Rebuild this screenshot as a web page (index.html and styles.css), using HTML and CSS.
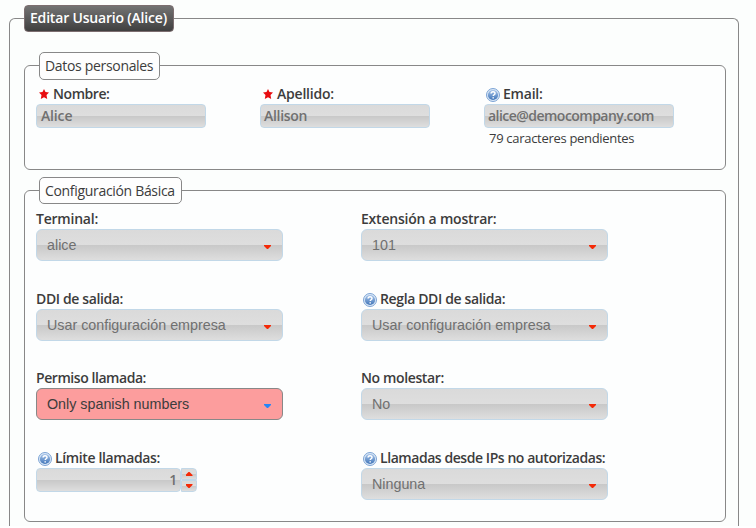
FILE: index.html
```html
<!DOCTYPE html>
<html lang="es">
<head>
<meta charset="utf-8">
<title>Editar Usuario</title>
<link rel="stylesheet" href="styles.css">
</head>
<body>
<svg class="defs" width="0" height="0">
  <defs>
    <linearGradient id="blue" x1="0" y1="0" x2="0" y2="1"><stop offset="0" stop-color="#a9c6ea"/><stop offset="1" stop-color="#3f74b8"/></linearGradient>
    <symbol id="help" viewBox="0 0 14 14">
      <circle cx="7" cy="7" r="6.5" fill="#dce9f7" stroke="#6f9bd0" stroke-width=".9"/>
      <circle cx="7" cy="7" r="5.1" fill="url(#blue)"/>
      <path d="M5.1 5.6c0-2.3 3.9-2.3 3.9-.2 0 1.4-1.8 1.3-1.8 2.7M7.2 9.2v1.4" fill="none" stroke="#fff" stroke-width="1.5"/>
    </symbol>
    <symbol id="star" viewBox="0 0 10 10"><path d="M5 0l1.5 3.1L10 3.6 7.5 6.1 8.2 10 5 8.3 1.8 10l.7-3.9L0 3.6l3.5-.5z" fill="#e80c10"/></symbol>
  </defs>
</svg>
<form class="panel">
  <h1 class="title">Editar Usuario (Alice)</h1>
  <section class="group personal">
    <h2 class="legend">Datos personales</h2>
    <div class="fields three">
      <div class="field"><label class="tight"><svg class="star"><use href="#star"/></svg><span>Nombre:</span></label><div class="input name">Alice</div></div>
      <div class="field"><label class="loose"><svg class="star"><use href="#star"/></svg><span>Apellido:</span></label><div class="input name">Allison</div></div>
      <div class="field"><label class="loose"><svg class="help"><use href="#help"/></svg><span>Email:</span></label><div class="input email">alice@democompany.com</div><small class="hint">79 caracteres pendientes</small></div>
    </div>
  </section>
  <section class="group basic">
    <h2 class="legend">Configuración Básica</h2>
    <div class="fields two">
      <div class="field"><label class="loose"><span>Terminal:</span></label><div class="select">alice<i class="down"></i></div></div>
      <div class="field"><label class="loose"><span>Extensión a mostrar:</span></label><div class="select">101<i class="down"></i></div></div>
      <div class="field"><label><span>DDI de salida:</span></label><div class="select">Usar configuración empresa<i class="down"></i></div></div>
      <div class="field"><label><svg class="help"><use href="#help"/></svg><span>Regla DDI de salida:</span></label><div class="select">Usar configuración empresa<i class="down"></i></div></div>
      <div class="field"><label class="tight"><span>Permiso llamada:</span></label><div class="select changed">Only spanish numbers<i class="down"></i></div></div>
      <div class="field"><label><span>No molestar:</span></label><div class="select">No<i class="down"></i></div></div>
      <div class="field"><label><svg class="help"><use href="#help"/></svg><span>Límite llamadas:</span></label>
        <div class="spinner"><div class="input number">1</div><div class="steps"><b><i class="up"></i></b><b><i class="down"></i></b></div></div></div>
      <div class="field"><label class="tight"><svg class="help"><use href="#help"/></svg><span>Llamadas desde IPs no autorizadas:</span></label><div class="select">Ninguna<i class="down"></i></div></div>
    </div>
  </section>
</form>
</body>
</html>
```
FILE: styles.css
```css
* { box-sizing: border-box; }
html { background: #fff; }
body { margin: 0; height: 526px; overflow: hidden; background: #fcfefd; color: #3c3c3c; font: 14px/20px "Open Sans", "Noto Sans", sans-serif; }
.defs { display: block; height: 0; }
.panel { margin: 18px 17px 0 9px; height: 508px; border: 1px solid #888; border-bottom: 0; border-radius: 6px 6px 0 0; padding: 0 12px 0 14px; display: flow-root; }
.title { margin: -14px 0 0; height: 27px; width: 150px; padding: 0 0 0 5px; border: 1px solid #7c6e70; border-radius: 4px; background: linear-gradient(#737373, #3f3f3f); color: #fff; font-size: 14px; font-weight: 600; line-height: 24px; white-space: nowrap; letter-spacing: -.19px; }
.group { border: 1px solid #888; border-radius: 6px; background: #fdfefe; padding: 0 0 0 11px; display: flow-root; }
.personal { margin-top: 33px; height: 105px; }
.basic { margin-top: 20px; height: 332px; }
.legend { width: fit-content; height: 28px; margin: -14px 0 0 3px; padding: 0 6px 0 5px; border: 1px solid #888; border-radius: 5px; background: #fefefe; font-size: 14px; font-weight: 400; line-height: 26px; white-space: nowrap; letter-spacing: -.32px; }
.fields { display: grid; margin-top: 4px; }
.basic .legend { height: 27px; }
.basic .fields { margin-top: 5px; }
.three { grid-template-columns: 224px 224px 190px; }
.two { grid-template-columns: 325px 247px; grid-template-rows: 80px 79px 80px 52px; }
label { display: flex; align-items: center; height: 20px; font-weight: 600; letter-spacing: -.37px; white-space: nowrap; }
.tight { letter-spacing: -.44px; }
.loose { letter-spacing: -.22px; }
.star { flex: none; width: 10px; height: 10px; margin: 0 4px 0 3px; }
.help { flex: none; width: 14px; height: 14px; margin: 2px 3px 0 2px; }
.input, .select, .steps b { border: 1px solid #c2d8e8; background: linear-gradient(#dadada, #dedede 50%, #c8c8c8 50%, #dedede); color: #707070; }
.input { height: 24px; border-radius: 4px; padding-left: 4px; line-height: 22px; font-weight: 600; letter-spacing: -.15px; }
.name { width: 170px; }
.field:nth-child(2) .name { padding-left: 3px; letter-spacing: -.3px; }
.email { width: 190px; padding-left: 3px; letter-spacing: -.53px; }
.hint { display: block; padding-left: 5px; font-size: 13px; line-height: 20px; white-space: nowrap; letter-spacing: -.3px; }
.select { display: flex; align-items: center; justify-content: space-between; width: 247px; height: 32px; border-radius: 6px; padding: 0 11px 1px 10px; font: 14.3px/16px "Liberation Sans", sans-serif; }
.changed { background: #fc9d9d; border-color: #888; color: #3c3c3c; }
.down, .up { display: block; width: 7px; height: 4px; background: #f42a08; clip-path: polygon(0 0, 100% 0, 100% 25%, 57% 100%, 43% 100%, 0 25%); }
.up { clip-path: polygon(43% 0, 57% 0, 100% 75%, 100% 100%, 0 100%, 0 75%); }
.select .down { margin-top: 5px; }
.changed .down { background: #2586f8; }
.spinner { display: flex; }
.number { width: 145px; text-align: right; padding-right: 3px; }
.steps { display: flex; flex-direction: column; width: 16px; height: 24px; }
.steps b { display: flex; align-items: center; justify-content: center; height: 12px; }
.steps b:first-child { border-radius: 0 4px 0 0; }
.steps b:last-child { border-radius: 0 0 4px 0; }
```
